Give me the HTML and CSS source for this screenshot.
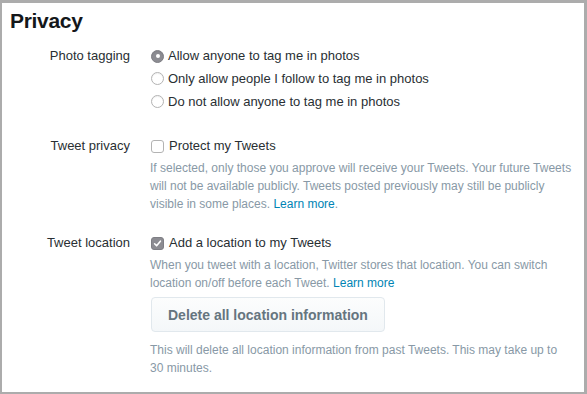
FILE: index.html
```html
<!DOCTYPE html>
<html>
<head>
<meta charset="utf-8">
<link rel="stylesheet" href="styles.css">
</head>
<body>
<div class="frame">
  <h1 class="title">Privacy</h1>

  <div class="section section-radios">
    <div class="label">Photo tagging</div>
    <div class="content">
      <label class="option"><span class="radio checked"></span>Allow anyone to tag me in photos</label>
      <label class="option"><span class="radio"></span>Only allow people I follow to tag me in photos</label>
      <label class="option"><span class="radio"></span>Do not allow anyone to tag me in photos</label>
    </div>
  </div>

  <div class="section">
    <div class="label">Tweet privacy</div>
    <div class="content">
      <label class="option"><span class="checkbox"></span>Protect my Tweets</label>
      <p class="help">If selected, only those you approve will receive your Tweets. Your future Tweets will not be available publicly. Tweets posted previously may still be publicly visible in some places. <a class="link" href="#">Learn more</a>.</p>
    </div>
  </div>

  <div class="section">
    <div class="label">Tweet location</div>
    <div class="content">
      <label class="option"><span class="checkbox checked"><svg viewBox="0 0 13 13" width="13" height="13"><path d="M3.6 6.8 L5.6 8.8 L9.4 4.2" fill="none" stroke="#fff" stroke-width="1.6" stroke-linecap="round" stroke-linejoin="round"/></svg></span>Add a location to my Tweets</label>
      <p class="help">When you tweet with a location, Twitter stores that location. You can switch location on/off before each Tweet. <a class="link" href="#">Learn more</a></p>
      <button class="btn" type="button">Delete all location information</button>
      <p class="help help-after">This will delete all location information from past Tweets. This may take up to 30 minutes.</p>
    </div>
  </div>
</div>
</body>
</html>
```

FILE: styles.css
```css
html, body {
  margin: 0;
  padding: 0;
  background: #fff;
}

body {
  font-family: "Liberation Sans", Arial, sans-serif;
  color: #292f33;
}

.frame {
  box-sizing: border-box;
  width: 587px;
  height: 394px;
  border-style: solid;
  border-color: #acacac;
  border-width: 3px 3px 2px 2px;
  padding: 5px 0 0 8px;
  overflow: hidden;
}

.title {
  margin: 0;
  font-size: 21px;
  line-height: 26px;
  font-weight: bold;
  color: #14171a;
  letter-spacing: -0.3px;
}

.section {
  display: grid;
  grid-template-columns: 120px 430px;
  column-gap: 20px;
  margin-bottom: 19px;
}

.section-radios {
  margin-top: 11px;
  margin-bottom: 22px;
}

.label {
  text-align: right;
  font-size: 13px;
  line-height: 22px;
  color: #292f33;
}

.content {
  display: flex;
  flex-direction: column;
  align-items: flex-start;
}

.option {
  display: flex;
  align-items: center;
  font-size: 13px;
  line-height: 22px;
  color: #292f33;
}

.section-radios .option {
  height: 23px;
}

.section-radios .option:first-child {
  height: 22px;
}

.radio {
  box-sizing: border-box;
  width: 13px;
  height: 13px;
  margin: 0 4px 0 1px;
  border-radius: 50%;
  border: 1px solid #b3b3b3;
  background: #fff;
  box-shadow: inset 0 1px 1px rgba(0, 0, 0, 0.06);
  position: relative;
  flex: none;
}

.radio.checked {
  border-color: #7e7e84;
  background: #8c8c92;
}

.radio.checked::after {
  content: "";
  position: absolute;
  left: 3.5px;
  top: 3.5px;
  width: 4px;
  height: 4px;
  border-radius: 50%;
  background: #fff;
}

.checkbox {
  box-sizing: border-box;
  width: 13px;
  height: 13px;
  margin: 0 5px 0 1px;
  border-radius: 3px;
  border: 1px solid #b3b3b3;
  background: #fff;
  flex: none;
  position: relative;
}

.checkbox.checked {
  border-color: #7e7e84;
  background: #8c8c92;
}

.checkbox svg {
  position: absolute;
  left: -1px;
  top: -1px;
}

.help {
  margin: 2px 0 0;
  font-size: 12px;
  line-height: 18px;
  color: #8899a6;
}

.link {
  color: #0084b4;
  text-decoration: none;
}

.btn {
  margin-top: 5px;
  margin-left: 1px;
  box-sizing: border-box;
  height: 35px;
  padding: 0 16px;
  font-family: "Liberation Sans", Arial, sans-serif;
  font-size: 14px;
  font-weight: bold;
  line-height: 18px;
  color: #66757f;
  background: linear-gradient(#fcfdfd, #f4f7f9);
  border: 1px solid #e1e8ed;
  border-radius: 4px;
}

.help-after {
  margin-top: 9px;
  max-width: 418px;
}
```
